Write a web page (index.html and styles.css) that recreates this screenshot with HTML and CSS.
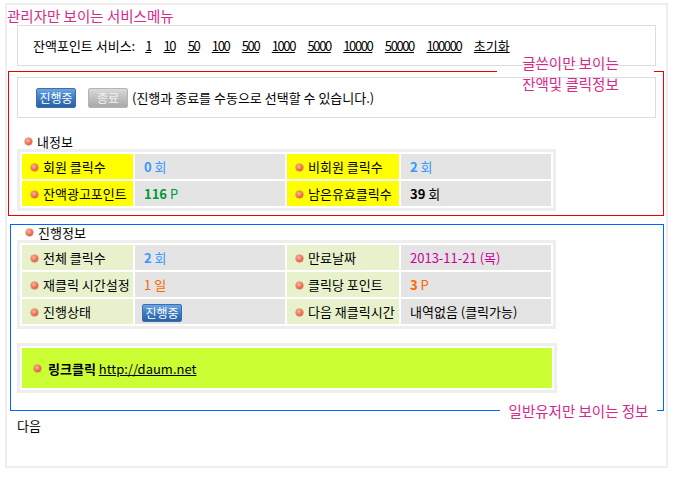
FILE: index.html
```html
<!DOCTYPE html>
<html>
  <head>
    <meta charset="UTF-8" />
    <title>클릭정보</title>
    <link rel="stylesheet" href="styles.css">
  </head>

  <body>
    <div class="page">
      <div class="admin-title">관리자만 보이는 서비스메뉴</div>
      <div class="service">
        <span class="service-label">잔액포인트 서비스:</span>
        <a class="num" href="#">1</a>
        <a class="num" href="#">10</a>
        <a class="num" href="#">50</a>
        <a class="num" href="#">100</a>
        <a class="num" href="#">500</a>
        <a class="num" href="#">1000</a>
        <a class="num" href="#">5000</a>
        <a class="num" href="#">10000</a>
        <a class="num" href="#">50000</a>
        <a class="num" href="#">100000</a>
        <a href="#">초기화</a>
      </div>

      <!-- 글쓴이 전용 -->
      <div class="box mine">
        <div class="note top">글쓴이만 보이는<br>잔액및 클릭정보</div>
        <div class="state">
          <span class="btn blue">진행중</span>
          <span class="btn gray">종료</span>
          <span class="state-text">(진행과 종료를 수동으로 선택할 수 있습니다.)</span>
        </div>
        <h3 class="head"><i class="dot"></i>내정보</h3>
        <table class="info yellow">
          <tr>
            <td class="lbl"><i class="dot"></i>회원 클릭수</td>
            <td class="val blue-t"><b>0</b> 회</td>
            <td class="lbl"><i class="dot"></i>비회원 클릭수</td>
            <td class="val blue-t"><b>2</b> 회</td>
          </tr>
          <tr>
            <td class="lbl"><i class="dot"></i>잔액광고포인트</td>
            <td class="val green-t"><b>116</b> P</td>
            <td class="lbl"><i class="dot"></i>남은유효클릭수</td>
            <td class="val"><b>39</b> 회</td>
          </tr>
        </table>
      </div>

      <!-- 일반유저 -->
      <div class="box user">
        <h3 class="head"><i class="dot"></i>진행정보</h3>
        <table class="info green">
          <tr>
            <td class="lbl"><i class="dot"></i>전체 클릭수</td>
            <td class="val blue-t"><b>2</b> 회</td>
            <td class="lbl"><i class="dot"></i>만료날짜</td>
            <td class="val pink-t">2013-11-21 (목)</td>
          </tr>
          <tr>
            <td class="lbl"><i class="dot"></i>재클릭 시간설정</td>
            <td class="val orange-t">1 일</td>
            <td class="lbl"><i class="dot"></i>클릭당 포인트</td>
            <td class="val orange-t"><b>3</b> P</td>
          </tr>
          <tr>
            <td class="lbl"><i class="dot"></i>진행상태</td>
            <td class="val"><span class="btn blue small">진행중</span></td>
            <td class="lbl"><i class="dot"></i>다음 재클릭시간</td>
            <td class="val">내역없음 (클릭가능)</td>
          </tr>
        </table>
        <div class="linkbox">
          <div class="linkbox-inner">
            <i class="dot"></i><b>링크클릭</b>&nbsp;<a href="#">http://daum.net</a>
          </div>
        </div>
        <div class="note bottom">일반유저만 보이는 정보</div>
      </div>

      <div class="next">다음</div>
    </div>
  </body>
</html>
```

FILE: styles.css
```css
* {
  margin: 0;
  padding: 0;
  box-sizing: border-box;
}

body {
  --pink: #d8288a;
  font-family: "Noto Sans CJK KR", "Noto Sans", sans-serif;
  font-size: 13px;
  color: #000;
  background: #fff;
}

a {
  color: #000;
}

.page {
  margin: 3px 0 0 5px;
  width: 663px;
  height: 465px;
  border: 2px solid #eeeeee;
}

.admin-title {
  color: var(--pink);
  font-size: 14.5px;
  line-height: 19px;
  padding-top: 1px;
}

.service {
  margin: 0 10px;
  height: 41px;
  border: 1px solid #dddddd;
  padding-left: 15px;
  display: flex;
  align-items: center;
}
.service-label {
  margin-right: 10px;
}
.service a {
  margin-right: 12px;
}
.service a.num {
  margin-right: 12.5px;
  letter-spacing: -1.4px;
}

/* 테두리 박스 */
.box {
  position: relative;
}
.mine {
  margin: 5px 2px 0 1px;
  border: 1px solid #ee0000;
  padding-bottom: 4px;
}
.user {
  margin: 8px 2px 0 3px;
  border: 1px solid #0066ff;
  padding-bottom: 17px;
}

.note {
  position: absolute;
  z-index: 1;
  width: 157px;
  color: var(--pink);
  font-size: 14.5px;
  line-height: 21px;
  text-align: center;
}
.note::before {
  content: "";
  position: absolute;
  z-index: -1;
  left: 0;
  right: 0;
  height: 1px;
  background: #fff;
}
.note.top {
  top: -20px;
  right: 9px;
  padding-right: 10px;
}
.note.top::before {
  top: 19px;
}
.note.bottom {
  bottom: -11px;
  right: 6px;
}
.note.bottom::before {
  top: 10px;
}

.state {
  margin: 5px 7px 0 8px;
  height: 41px;
  border: 1px solid #dddddd;
  padding-left: 18px;
  display: flex;
  align-items: center;
}
.state-text {
  margin-left: 4px;
}

.btn {
  display: inline-block;
  width: 40px;
  height: 20px;
  line-height: 18px;
  text-align: center;
  color: #fff;
  border-radius: 2px;
  font-size: 12px;
}
.btn.blue {
  background: linear-gradient(#6aa6e2, #3a78bf 55%, #2c62a6);
  border: 1px solid #3a6fae;
}
.btn.gray {
  margin-left: 12px;
  color: #f2f2f2;
  background: linear-gradient(#dadada, #bdbdbd 55%, #a9a9a9);
  border: 1px solid #b4b4b4;
}
.btn.small {
  height: 18px;
  line-height: 16px;
}

.head {
  font-size: 13px;
  font-weight: normal;
  line-height: 15px;
  display: flex;
  align-items: center;
}
.mine .head {
  margin-top: 16px;
  padding-left: 16px;
}
.user .head {
  padding-left: 15px;
}

.dot {
  display: inline-block;
  width: 7px;
  height: 7px;
  border-radius: 50%;
  margin-right: 5px;
  background: radial-gradient(circle at 40% 35%, #ffb8a0, #f26a4e 55%, #c44a32);
  box-shadow: 0 0 0 0.5px #c9705c;
  flex: none;
}

.info {
  border-collapse: separate;
  border-spacing: 2px;
  border: 3px solid #eeeeee;
  background: #fff;
}
.mine .info {
  margin-left: 8px;
}
.user .info {
  margin-left: 6px;
}
.info td {
  height: 25px;
  padding: 0;
  white-space: nowrap;
}
.info .lbl {
  width: 111px;
  padding-left: 9px;
}
.info .lbl .dot {
  vertical-align: 1px;
}
.info td:nth-child(3) {
  width: 112px;
}
.info .val {
  width: 150px;
  padding-left: 9px;
  background: #e4e4e4;
}
.info.yellow .lbl {
  background: #ffff00;
}
.info.green .lbl {
  background: #e7f2cc;
}
.info .val .btn {
  margin-left: -2px;
  vertical-align: middle;
}

.blue-t {
  color: #3399ff;
}
.green-t {
  color: #009933;
}
.pink-t {
  color: #cc0099;
}
.orange-t {
  color: #ff6600;
}

.linkbox {
  margin: 14px 0 0 6px;
  width: 540px;
  border: 3px solid #eeeeee;
  padding: 2px;
  background: #fff;
}
.linkbox-inner {
  height: 40px;
  background: #ccff33;
  padding-left: 12px;
  display: flex;
  align-items: center;
}
.linkbox-inner .dot {
  margin-right: 7px;
}

.next {
  margin: 6px 0 0 10px;
  line-height: 17px;
}
```
